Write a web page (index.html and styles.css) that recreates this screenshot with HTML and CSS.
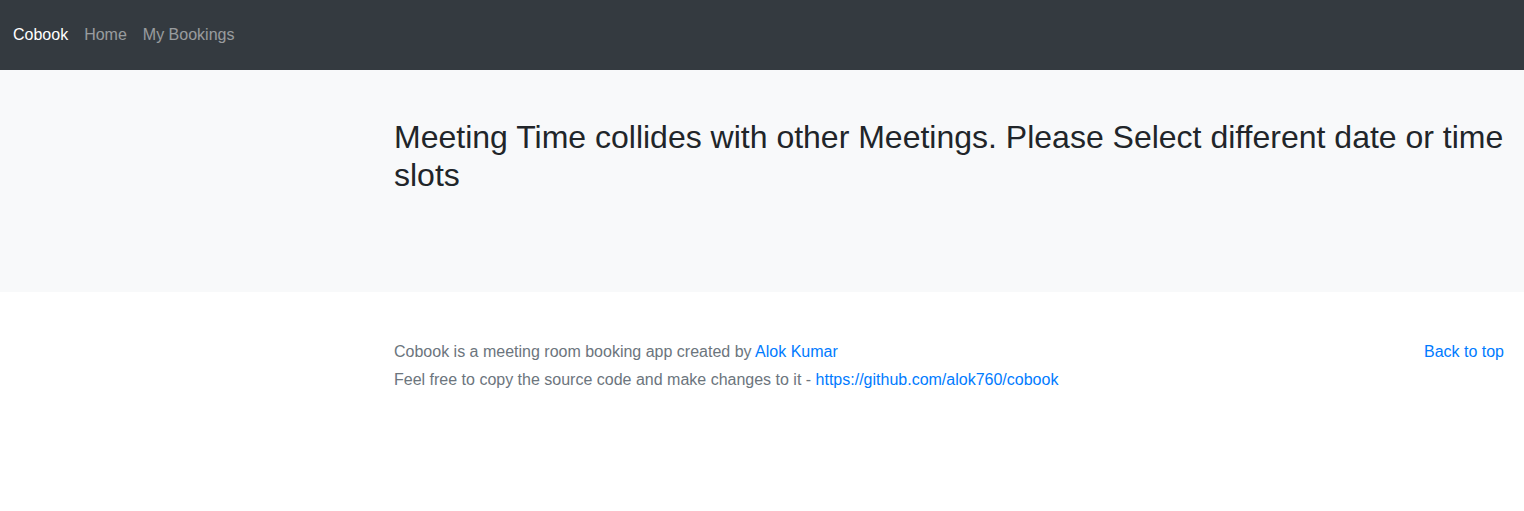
FILE: index.html
```html
<!DOCTYPE html>
<html lang="en">
<head>
<meta charset="utf-8">
<title>Cobook</title>
<link rel="stylesheet" href="styles.css">
</head>
<body>
<nav class="navbar">
  <a class="brand" href="#">Cobook</a>
  <a class="nav-link" href="#">Home</a>
  <a class="nav-link" href="#">My Bookings</a>
</nav>
<section class="jumbotron">
  <div class="layout">
    <div class="side"></div>
    <div class="main">
      <h2 class="title">Meeting Time collides with other Meetings. Please Select different date or time slots</h2>
    </div>
  </div>
</section>
<footer class="footer">
  <div class="layout">
    <div class="side"></div>
    <div class="main footer-main">
      <div class="footer-text">
        <p>Cobook is a meeting room booking app created by <a href="#">Alok Kumar</a></p>
        <p>Feel free to copy the source code and make changes to it - <a href="#">https://github.com/alok760/cobook</a></p>
      </div>
      <p class="back"><a href="#">Back to top</a></p>
    </div>
  </div>
</footer>
</body>
</html>
```

FILE: styles.css
```css
* { box-sizing: border-box; }
html, body {
  margin: 0;
  padding: 0;
  font-family: "Liberation Sans", Arial, sans-serif;
  font-size: 16px;
  line-height: 1.5;
  color: #212529;
  background: #fff;
}
a { color: #007bff; text-decoration: none; }

.navbar {
  height: 70px;
  background: #343a40;
  display: flex;
  align-items: center;
  gap: 16px;
  padding-left: 13px;
}
.navbar .brand { color: #fff; font-size: 16px; }
.navbar .nav-link { color: rgba(255, 255, 255, 0.5); font-size: 16px; }

.layout {
  display: grid;
  grid-template-columns: 394px 1fr;
  padding-right: 20px;
}

.jumbotron {
  background: #f8f9fa;
  height: 222px;
  padding-top: 48px;
}
.title {
  margin: 0 0 8px;
  font-size: 32px;
  font-weight: 400;
  line-height: 1.2;
  color: #212529;
}

.footer {
  padding: 48px 0;
  color: #6c757d;
}
.footer-main {
  display: flex;
  justify-content: space-between;
  align-items: flex-start;
}
.footer p { margin: 0 0 4px; }
```
